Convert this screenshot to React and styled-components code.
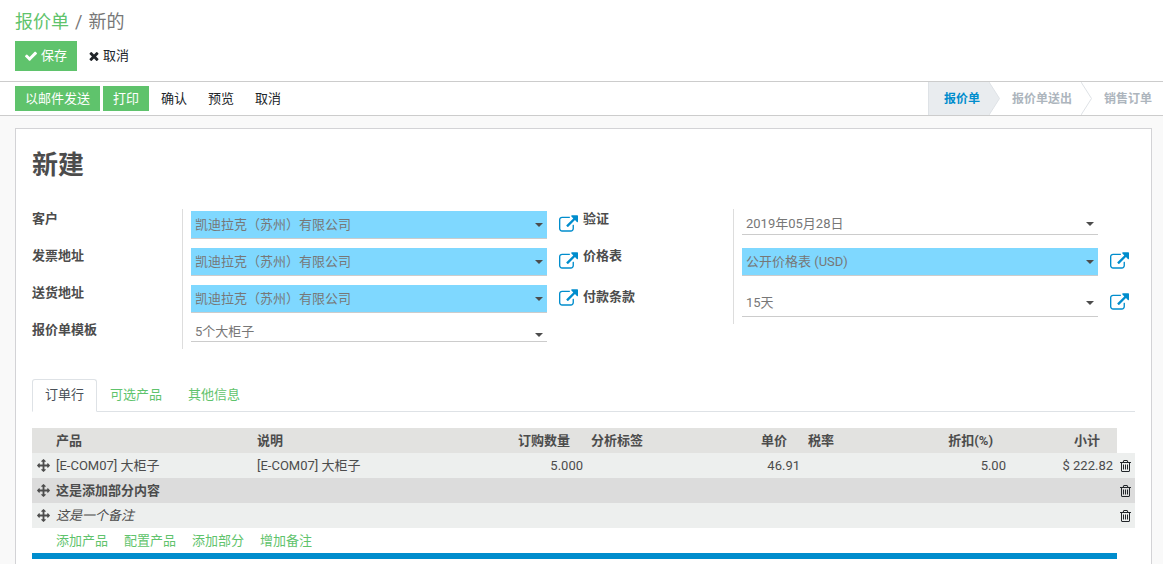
import React from 'react';
import styled, { createGlobalStyle, css } from 'styled-components';

const GlobalStyle = createGlobalStyle`
  *, *::before, *::after {
    box-sizing: border-box;
  }

  body {
    margin: 0;
    background: #f9f9f9;
    color: #4c4c4c;
    font-family: Roboto, "Noto Sans CJK SC", sans-serif;
    font-size: 13px;
    line-height: 20px;
  }

  button, input, select {
    font: inherit;
    color: inherit;
    margin: 0;
    border: 0;
    border-radius: 0;
    outline: 0;
  }

  a {
    text-decoration: none;
  }
`;

const Page = styled.div`
  display: flex;
  flex-direction: column;
  height: 100vh;
`;

const ControlPanel = styled.header`
  display: flex;
  flex-direction: column;
  gap: 8px;
  padding: 11px 15px 10px;
  background: #fff;
  border-bottom: 1px solid #cccccc;
`;

const Breadcrumb = styled.nav`
  display: flex;
  gap: 6px;
  font-size: 18px;
  line-height: 22px;
  color: #777;

  a {
    color: #5fc36c;
  }
`;

const ButtonRow = styled.div`
  display: flex;
  align-items: center;
  gap: 3px;
`;

const Button = styled.button`
  display: flex;
  align-items: center;
  gap: 4px;
  height: ${({ $small }) => ($small ? '25px' : '30px')};
  padding: 0 9px;
  background: #fff;
  color: #212529;
  white-space: nowrap;
  cursor: pointer;

  ${({ $primary }) => $primary && css`
    padding: 0 10px;
    background: #5fc36c;
    color: #fff;
  `}
`;

const StatusBar = styled.div`
  display: flex;
  justify-content: space-between;
  align-items: center;
  height: 34px;
  padding-left: 15px;
  background: #fff;
  border-bottom: 1px solid #cccccc;
`;

const Steps = styled.div`
  display: flex;
  height: 33px;
`;

const Step = styled.button`
  display: flex;
  align-items: center;
  gap: 9px;
  padding: 0 0 0 12px;
  background: #fff;
  color: #adb5bd;
  font-size: 12px;
  font-weight: 700;
  white-space: nowrap;

  &:last-child {
    padding-right: 11px;
  }

  ${({ $active }) => $active && css`
    padding-left: 15px;
    background: linear-gradient(#e9ecef, #e9ecef) no-repeat 0 0 / calc(100% - 11px) 100%;
    border-left: 1px solid #dee2e6;
    color: #008dcd;
  `}
`;

const Content = styled.main`
  flex: 1;
  min-height: 0;
  padding: 12px 11px 12px 15px;
  overflow-y: auto;
  scrollbar-width: none;
`;

const Sheet = styled.section`
  padding: 16px 16px 24px;
  background: #fff;
  border: 1px solid #d3d3d6;
`;

const Title = styled.h1`
  margin: 0 0 24px;
  font-size: 26px;
  line-height: 40px;
  font-weight: 700;
`;

const Groups = styled.div`
  display: grid;
  grid-template-columns: 1fr 1fr;
  align-items: start;
  margin: 0 1px 30px 0;
`;

const FieldRow = styled.div`
  display: grid;
  grid-template-columns: 150px 1fr;
  min-height: ${({ $height }) => $height || 0}px;
`;

const Label = styled.label`
  font-weight: 700;
  line-height: 20px;
`;

const FieldCell = styled.div`
  display: flex;
  align-items: flex-start;
  gap: 12px;
  padding: 2px 4px 7px 8px;
  border-left: 1px solid #dddddd;
`;

const ControlBox = styled.div`
  position: relative;
  flex: 1;
  min-width: 0;
  color: #777;
`;

const controlStyle = css`
  display: block;
  width: 100%;
  height: ${({ $height }) => $height}px;
  padding: 0 24px 0 4px;
  appearance: none;
  background: ${({ $required }) => ($required ? '#7fd8ff' : '#fff')};
  border-bottom: 1px solid #cccccc;
`;

const Select = styled.select`
  ${controlStyle}
`;

const Input = styled.input`
  ${controlStyle}
`;

const Caret = styled.svg`
  position: absolute;
  right: 4px;
  bottom: ${({ $low }) => ($low ? '5px' : '12px')};
  width: 8px;
  height: 4px;
  fill: #4c4c4c;
  pointer-events: none;

  ${Input} + & {
    bottom: 9px;
  }
`;

const OpenButton = styled.button`
  display: flex;
  width: 20px;
  height: 20px;
  padding: 4px 0 0;
  background: none;
  color: #008dcd;
  visibility: ${({ $hidden }) => ($hidden ? 'hidden' : 'visible')};
`;

const Tabs = styled.nav`
  display: flex;
  border-bottom: 1px solid #dee2e6;
  margin-bottom: 16px;
`;

const Tab = styled.a`
  height: 33px;
  margin-bottom: -1px;
  padding: 5px 12px;
  border: 1px solid transparent;
  border-radius: 3px 3px 0 0;
  color: #5fc36c;

  ${({ $active }) => $active && css`
    background: #fff;
    border-color: #dee2e6 #dee2e6 #fff;
    color: #495057;
  `}
`;

const Table = styled.table`
  width: 100%;
  table-layout: fixed;
  border-collapse: collapse;
`;

const Th = styled.th`
  height: 25px;
  padding: 0 4px;
  background: #e2e2e0;
  font-weight: 700;
  text-align: left;
  white-space: nowrap;

  ${({ $number }) => $number && css`
    padding-right: 17px;
    text-align: right;
  `}
`;

const Td = styled.td`
  height: 25px;
  padding: 0 4px;
  text-align: ${({ $number }) => ($number ? 'right' : 'left')};
  white-space: nowrap;
`;

const IconCell = styled.td`
  padding: 0 2px 0 ${({ $handle }) => ($handle ? '5px' : '3px')};
`;

const Line = styled.tr`
  background: #edefee;

  ${({ $kind }) => $kind === 'section' && css`
    background: #dcdcdc;
    font-weight: 700;
  `}

  ${({ $kind }) => $kind === 'note' && css`
    font-style: italic;
  `}
`;

const Handle = styled.span`
  display: flex;
  cursor: move;
`;

const DeleteButton = styled.button`
  display: flex;
  padding: 0;
  background: none;
  color: #212529;
`;

const AddLinks = styled.div`
  display: flex;
  gap: 16px;

  a {
    color: #5fc36c;
  }
`;

const FootCell = styled.td`
  height: 6px;
  padding: 0;
  background: #008dcd;
`;

// Font Awesome 4 outlines, as [viewBox, path]
const icons = {
  check: ['121 270 1550 1252', 'M1671 566q0 40-28 68l-724 724-136 136q-28 28-68 28t-68-28l-136-136-362-362q-28-28-28-68t28-68l136-136q28-28 68-28t68 28l294 295 656-657q28-28 68-28t68 28l136 136q28 28 28 68z'],
  times: ['302 366 1188 1188', 'M1490 1322q0 40-28 68l-136 136q-28 28-68 28t-68-28l-294-294-294 294q-28 28-68 28t-68-28l-136-136q-28-28-28-68t28-68l294-294-294-294q-28-28-28-68t28-68l136-136q28-28 68-28t68 28l294 294 294-294q28-28 68-28t68 28l136 136q28 28 28 68t-28 68l-294 294 294 294q28 28 28 68z'],
  external: ['0 0 1792 1536', 'M1408 928v320q0 119-84.5 203.5t-203.5 84.5h-832q-119 0-203.5-84.5t-84.5-203.5v-832q0-119 84.5-203.5t203.5-84.5h704q14 0 23 9t9 23v64q0 14-9 23t-23 9h-704q-66 0-113 47t-47 113v832q0 66 47 113t113 47h832q66 0 113-47t47-113v-320q0-14 9-23t23-9h64q14 0 23 9t9 23zm384-864v512q0 26-19 45t-45 19-45-19l-176-176-652 652q-10 10-23 10t-23-10l-114-114q-10-10-10-23t10-23l652-652-176-176q-19-19-19-45t19-45 45-19h512q26 0 45 19t19 45z'],
  arrows: ['0 0 1792 1792', 'M1792 896q0 26-19 45l-256 256q-19 19-45 19t-45-19-19-45v-128h-384v384h128q26 0 45 19t19 45-19 45l-256 256q-19 19-45 19t-45-19l-256-256q-19-19-19-45t19-45 45-19h128v-384h-384v128q0 26-19 45t-45 19-45-19l-256-256q-19-19-19-45t19-45l256-256q19-19 45-19t45 19 19 45v128h384v-384h-128q-26 0-45-19t-19-45 19-45l256-256q19-19 45-19t45 19l256 256q19 19 19 45t-19 45-45 19h-128v384h384v-128q0-26 19-45t45-19 45 19l256 256q19 19 19 45z'],
  trash: ['192 128 1408 1536', 'M704 736v576q0 14-9 23t-23 9h-64q-14 0-23-9t-9-23v-576q0-14 9-23t23-9h64q14 0 23 9t9 23zm256 0v576q0 14-9 23t-23 9h-64q-14 0-23-9t-9-23v-576q0-14 9-23t23-9h64q14 0 23 9t9 23zm256 0v576q0 14-9 23t-23 9h-64q-14 0-23-9t-9-23v-576q0-14 9-23t23-9h64q14 0 23 9t9 23zm128 724v-948h-896v948q0 22 7 40.5t14.5 27 10.5 8.5h832q3 0 10.5-8.5t14.5-27 7-40.5zm-672-1076h448l-48-117q-7-9-17-11h-317q-10 2-17 11zm928 32v64q0 14-9 23t-23 9h-96v948q0 83-47 143.5t-113 60.5h-832q-66 0-113-58.5t-47-141.5v-952h-96q-14 0-23-9t-9-23v-64q0-14 9-23t23-9h309l70-167q15-37 54-63t79-26h320q40 0 79 26t54 63l70 167h309q14 0 23 9t9 23z'],
};

function Icon({ name, width, height }) {
  const [viewBox, d] = icons[name];
  return (
    <svg width={width} height={height} viewBox={viewBox} fill="currentColor" aria-hidden="true">
      <path d={d} />
    </svg>
  );
}

function Chevron({ filled }) {
  return (
    <svg width="11" height="33" viewBox="0 0 11 33" aria-hidden="true">
      <path d="M0 0L10.5 16.5L0 33" fill={filled ? '#e9ecef' : 'none'} stroke="#dee2e6" />
    </svg>
  );
}

function Field({ id, label, value, type = 'select', required, open, height = 28, rowHeight }) {
  return (
    <FieldRow $height={rowHeight}>
      <Label htmlFor={id}>{label}</Label>
      <FieldCell>
        <ControlBox>
          {type === 'date' ? (
            <Input id={id} type="text" defaultValue={value} $height={height} />
          ) : (
            <Select id={id} $height={height} $required={required}>
              <option>{value}</option>
            </Select>
          )}
          <Caret viewBox="0 0 8 4" $low={height < 24}>
            <path d="M0 0h8L4 4z" />
          </Caret>
        </ControlBox>
        <OpenButton type="button" aria-label={label} $hidden={!open}>
          <Icon name="external" width={19} height={17} />
        </OpenButton>
      </FieldCell>
    </FieldRow>
  );
}

function LineEnd() {
  return (
    <IconCell>
      <DeleteButton type="button">
        <Icon name="trash" width={11} height={12} />
      </DeleteButton>
    </IconCell>
  );
}

function LineHandle() {
  return (
    <IconCell $handle>
      <Handle>
        <Icon name="arrows" width={13} height={13} />
      </Handle>
    </IconCell>
  );
}

function OrderLines() {
  return (
    <Table>
      <colgroup>
        <col style={{ width: 20 }} />
        <col style={{ width: 201 }} />
        <col />
        <col style={{ width: 90 }} />
        <col style={{ width: 126 }} />
        <col style={{ width: 91 }} />
        <col style={{ width: 101 }} />
        <col style={{ width: 105 }} />
        <col style={{ width: 107 }} />
        <col style={{ width: 18 }} />
      </colgroup>
      <thead>
        <tr>
          <Th />
          <Th>产品</Th>
          <Th>说明</Th>
          <Th $number>订购数量</Th>
          <Th>分析标签</Th>
          <Th $number>单价</Th>
          <Th>税率</Th>
          <Th $number>折扣(%)</Th>
          <Th $number>小计</Th>
          <td />
        </tr>
      </thead>
      <tbody>
        <Line>
          <LineHandle />
          <Td>[E-COM07] 大柜子</Td>
          <Td>[E-COM07] 大柜子</Td>
          <Td $number>5.000</Td>
          <Td />
          <Td $number>46.91</Td>
          <Td />
          <Td $number>5.00</Td>
          <Td $number>$ 222.82</Td>
          <LineEnd />
        </Line>
        <Line $kind="section">
          <LineHandle />
          <Td colSpan={8}>这是添加部分内容</Td>
          <LineEnd />
        </Line>
        <Line $kind="note">
          <LineHandle />
          <Td colSpan={8}>这是一个备注</Td>
          <LineEnd />
        </Line>
        <tr>
          <Td />
          <Td colSpan={9}>
            <AddLinks>
              <a href="#product">添加产品</a>
              <a href="#configure">配置产品</a>
              <a href="#section">添加部分</a>
              <a href="#note">增加备注</a>
            </AddLinks>
          </Td>
        </tr>
      </tbody>
      <tfoot>
        <tr>
          <FootCell colSpan={9} />
          <td />
        </tr>
      </tfoot>
    </Table>
  );
}

function App() {
  return (
    <Page>
      <GlobalStyle />
      <ControlPanel>
        <Breadcrumb>
          <a href="#quotations">报价单</a>
          <span>/</span>
          <span>新的</span>
        </Breadcrumb>
        <ButtonRow>
          <Button type="button" $primary>
            <Icon name="check" width={12} height={10} />
            保存
          </Button>
          <Button type="button">
            <Icon name="times" width={10} height={9} />
            取消
          </Button>
        </ButtonRow>
      </ControlPanel>

      <StatusBar>
        <ButtonRow>
          <Button type="button" $small $primary>以邮件发送</Button>
          <Button type="button" $small $primary>打印</Button>
          <Button type="button" $small>确认</Button>
          <Button type="button" $small>预览</Button>
          <Button type="button" $small>取消</Button>
        </ButtonRow>
        <Steps>
          <Step type="button" $active>
            报价单
            <Chevron filled />
          </Step>
          <Step type="button">
            报价单送出
            <Chevron />
          </Step>
          <Step type="button">销售订单</Step>
        </Steps>
      </StatusBar>

      <Content>
        <Sheet>
          <Title>新建</Title>
          <Groups>
            <div>
              <Field id="customer" label="客户" value="凯迪拉克（苏州）有限公司" required open />
              <Field id="invoice" label="发票地址" value="凯迪拉克（苏州）有限公司" required open />
              <Field id="delivery" label="送货地址" value="凯迪拉克（苏州）有限公司" required open />
              <Field id="template" label="报价单模板" value="5个大柜子" height={20} />
            </div>
            <div>
              <Field id="validity" label="验证" value="2019年05月28日" type="date" height={24} rowHeight={37} />
              <Field id="pricelist" label="价格表" value="公开价格表 (USD)" required open rowHeight={41} />
              <Field id="payment" label="付款条款" value="15天" open />
            </div>
          </Groups>

          <Tabs>
            <Tab href="#lines" $active>订单行</Tab>
            <Tab href="#optional">可选产品</Tab>
            <Tab href="#other">其他信息</Tab>
          </Tabs>
          <OrderLines />
        </Sheet>
      </Content>
    </Page>
  );
}

export default App;
